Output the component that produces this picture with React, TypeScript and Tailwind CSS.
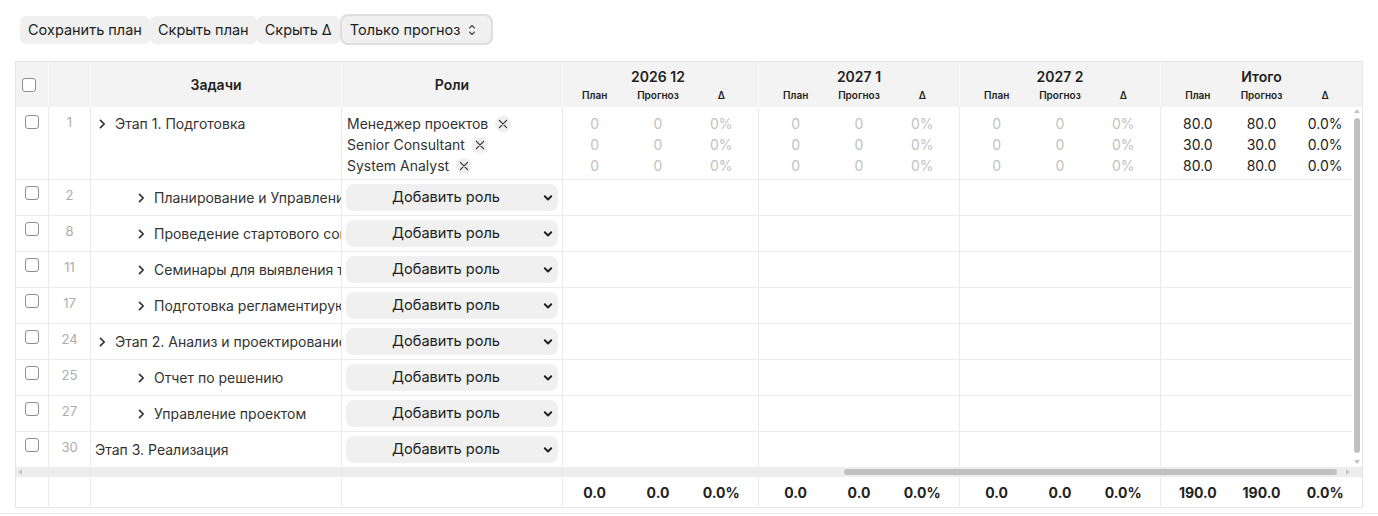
import React from "react";

type Task = { n: number; level: 0 | 1 | 2; title: string };

const tasks: Task[] = [
  { n: 2, level: 2, title: "Планирование и Управление проектом" },
  { n: 8, level: 2, title: "Проведение стартового совещания" },
  { n: 11, level: 2, title: "Семинары для выявления требований" },
  { n: 17, level: 2, title: "Подготовка регламентирующих документов" },
  { n: 24, level: 1, title: "Этап 2. Анализ и проектирование" },
  { n: 25, level: 2, title: "Отчет по решению" },
  { n: 27, level: 2, title: "Управление проектом" },
  { n: 30, level: 0, title: "Этап 3. Реализация" },
];

const groups = ["2026 12", "2027 1", "2027 2", "Итого"];
const roles = ["Менеджер проектов", "Senior Consultant", "System Analyst"];
const totals = [
  ["80.0", "80.0", "0.0%"],
  ["30.0", "30.0", "0.0%"],
  ["80.0", "80.0", "0.0%"],
];

function ChevronRight() {
  return (
    <svg width="12" height="12" viewBox="0 0 12 12" className="shrink-0">
      <path d="M4.5 2.3 L8.2 6 L4.5 9.7" fill="none" stroke="#333" strokeWidth="1.7" strokeLinecap="round" strokeLinejoin="round" />
    </svg>
  );
}

function ChevronDown() {
  return (
    <svg width="10" height="10" viewBox="0 0 10 10">
      <path d="M1.8 3.3 L5 6.5 L8.2 3.3" fill="none" stroke="#222" strokeWidth="2" strokeLinecap="round" strokeLinejoin="round" />
    </svg>
  );
}

function UpDown() {
  return (
    <svg width="8" height="14" viewBox="0 0 8 14">
      <path d="M1.5 5 L4 2.5 L6.5 5" fill="none" stroke="#444" strokeWidth="1.1" strokeLinecap="round" strokeLinejoin="round" />
      <path d="M1.5 9 L4 11.5 L6.5 9" fill="none" stroke="#444" strokeWidth="1.1" strokeLinecap="round" strokeLinejoin="round" />
    </svg>
  );
}

function XIcon() {
  return (
    <svg width="10" height="10" viewBox="0 0 10 10">
      <path d="M1.4 1.4 L8.6 8.6 M8.6 1.4 L1.4 8.6" fill="none" stroke="#333" strokeWidth="1.2" strokeLinecap="round" />
    </svg>
  );
}

function Tri({ dir }: { dir: "up" | "down" | "left" | "right" }) {
  const pts =
    dir === "up"
      ? "5,2 8,6 2,6"
      : dir === "down"
      ? "2,4 8,4 5,8"
      : dir === "left"
      ? "6,2 6,8 2,5"
      : "4,2 4,8 8,5";
  return (
    <svg width="10" height="10" viewBox="0 0 10 10">
      <polygon points={pts} fill="#c4c4c4" />
    </svg>
  );
}

function Check({ className = "" }: { className?: string }) {
  return (
    <input
      type="checkbox"
      className={"appearance-none block m-0 w-[14px] h-[14px] rounded-[3px] border border-[#8e8e8e] bg-white " + className}
    />
  );
}

function AddRole() {
  return (
    <div className="w-[212px] h-[27px] rounded-[8px] bg-[#f0f0f0] flex items-center pl-[8px] text-[14.6px] text-[#222]">
      <span className="flex-1 text-center">Добавить роль</span>
      <span className="w-[20px] flex items-center justify-center">
        <ChevronDown />
      </span>
    </div>
  );
}

function Toolbar() {
  const btn = "h-[28px] px-[8px] rounded-[6px] bg-[#f0f0f0] text-[14.5px] text-[#222] flex items-center";
  return (
    <div className="pt-[14px] pl-[20px] flex items-center h-[45px]">
      <button className={btn}>Сохранить план</button>
      <button className={btn}>Скрыть план</button>
      <button className={btn}>Скрыть Δ</button>
      <button className="h-[31px] pl-[8px] pr-[15px] rounded-[8px] bg-[#f0f0f0] border-2 border-[#dedede] text-[14.5px] text-[#222] flex items-center gap-[8px]">
        <span>Только прогноз</span>
        <UpDown />
      </button>
    </div>
  );
}

function HeaderRow() {
  return (
    <div className="flex h-[45px] bg-[#f3f3f3] text-[#222]">
      <div className="w-[33px] border-r border-[#fafafa] flex items-center pl-[6px]">
        <Check />
      </div>
      <div className="w-[42px] border-r border-[#fafafa]" />
      <div className="w-[251px] border-r border-[#fafafa] flex items-center justify-center text-[14px] font-semibold">Задачи</div>
      <div className="w-[221px] border-r border-[#fafafa] flex items-center justify-center text-[14px] font-semibold">Роли</div>
      <div className="w-[799px] overflow-hidden">
        <div className="flex ml-[-5px] w-[804px]">
          {groups.map((g, i) => (
            <div key={g} className={"w-[201px] shrink-0 h-[45px] pt-[6px] " + (i < 3 ? "border-r border-[#fafafa]" : "")}>
              <div className="h-[18px] leading-[18px] text-center text-[14px] font-semibold">{g}</div>
              <div className="mt-[2px] grid grid-cols-3 px-[5px] text-center text-[10px] leading-[14px] font-semibold">
                <span>План</span>
                <span>Прогноз</span>
                <span>Δ</span>
              </div>
            </div>
          ))}
        </div>
      </div>
    </div>
  );
}

function FirstRow() {
  return (
    <div className="flex h-[73px] shrink-0 border-b border-[#ebebeb]">
      <div className="w-[33px] border-r border-[#ebebeb] pl-[9px] pt-[8px]">
        <Check />
      </div>
      <div className="w-[42px] border-r border-[#ebebeb] pt-[7px] text-center text-[13px] leading-[16px] text-[#adadad]">1</div>
      <div className="w-[251px] border-r border-[#ebebeb] pt-[6px] pl-[5px] flex items-start overflow-hidden whitespace-nowrap text-[14px] leading-[21px]">
        <span className="h-[21px] w-[16px] flex items-center shrink-0">
          <ChevronRight />
        </span>
        <span className="ml-[3px]">Этап 1. Подготовка</span>
      </div>
      <div className="w-[221px] border-r border-[#ebebeb] pt-[6px] pl-[5px] text-[14px] leading-[21px]">
        {roles.map((r) => (
          <div key={r} className="flex items-center h-[21px]">
            <span>{r}</span>
            <span className="ml-[7px] w-[16px] h-[16px] rounded-full bg-[#efefef] flex items-center justify-center">
              <XIcon />
            </span>
          </div>
        ))}
      </div>
      <div className="w-[789px] overflow-hidden">
        <div className="flex ml-[-5px] w-[804px] h-full">
          {groups.map((g, gi) => (
            <div key={g} className={"w-[201px] shrink-0 h-full pt-[6px] px-[5px] " + (gi < 3 ? "border-r border-[#ebebeb]" : "")}>
              {[0, 1, 2].map((ri) => (
                <div key={ri} className={"grid grid-cols-3 text-center text-[14px] leading-[21px] " + (gi < 3 ? "text-[#c2c2c2]" : "text-[#222]")}>
                  {gi < 3 ? (
                    <>
                      <span>0</span>
                      <span>0</span>
                      <span>0%</span>
                    </>
                  ) : (
                    totals[ri].map((v, k) => <span key={k}>{v}</span>)
                  )}
                </div>
              ))}
            </div>
          ))}
        </div>
      </div>
    </div>
  );
}

function TaskRow({ t }: { t: Task }) {
  return (
    <div className="flex h-[36px] shrink-0 border-b border-[#ebebeb]">
      <div className="w-[33px] border-r border-[#ebebeb] pl-[9px] pt-[6px]">
        <Check />
      </div>
      <div className="w-[42px] border-r border-[#ebebeb] pt-[7px] text-center text-[13px] leading-[16px] text-[#adadad]">{t.n}</div>
      <div
        className={
          "w-[251px] border-r border-[#ebebeb] pt-[7px] flex items-start overflow-hidden whitespace-nowrap text-[14px] leading-[21px] " +
          (t.level === 2 ? "pl-[44px]" : t.level === 1 ? "pl-[5px]" : "pl-[4px]")
        }
      >
        {t.level > 0 && (
          <span className="h-[21px] w-[16px] flex items-center shrink-0 mr-[3px]">
            <ChevronRight />
          </span>
        )}
        <span>{t.title}</span>
      </div>
      <div className="w-[221px] border-r border-[#ebebeb] pt-[4px] pl-[4px]">
        <AddRole />
      </div>
      <div className="w-[789px] overflow-hidden">
        <div className="flex ml-[-5px] w-[804px] h-full">
          {groups.map((g, gi) => (
            <div key={g} className={"w-[201px] shrink-0 h-full " + (gi < 3 ? "border-r border-[#ebebeb]" : "")} />
          ))}
        </div>
      </div>
    </div>
  );
}

function VScroll() {
  return (
    <div className="w-[10px] shrink-0 bg-white flex flex-col items-center">
      <div className="h-[10px] flex items-center justify-center">
        <Tri dir="up" />
      </div>
      <div className="mt-[1px] w-[6px] h-[335px] rounded-full bg-[#c1c1c1]" />
      <div className="mt-[3px] h-[10px] flex items-center justify-center">
        <Tri dir="down" />
      </div>
    </div>
  );
}

function HScroll() {
  return (
    <div className="flex h-[10px] bg-[#ededed]">
      <div className="w-[10px] flex items-center justify-center">
        <Tri dir="left" />
      </div>
      <div className="flex-1 flex items-center justify-end pr-[5px]">
        <div className="w-[493px] h-[6px] rounded-full bg-[#c1c1c1]" />
      </div>
      <div className="w-[10px] flex items-center justify-center">
        <Tri dir="right" />
      </div>
      <div className="w-[10px]" />
    </div>
  );
}

function FooterRow() {
  const tot = [
    ["0.0", "0.0", "0.0%"],
    ["0.0", "0.0", "0.0%"],
    ["0.0", "0.0", "0.0%"],
    ["190.0", "190.0", "0.0%"],
  ];
  return (
    <div className="flex h-[30px] text-[14px] font-bold text-[#222]">
      <div className="w-[33px] border-r border-[#ebebeb]" />
      <div className="w-[42px] border-r border-[#ebebeb]" />
      <div className="w-[251px] border-r border-[#ebebeb]" />
      <div className="w-[221px] border-r border-[#ebebeb]" />
      <div className="w-[799px] overflow-hidden">
        <div className="flex ml-[-5px] w-[804px] h-full">
          {tot.map((row, gi) => (
            <div key={gi} className={"w-[201px] shrink-0 h-full px-[5px] grid grid-cols-3 items-center text-center " + (gi < 3 ? "border-r border-[#ebebeb]" : "")}>
              {row.map((v, k) => (
                <span key={k}>{v}</span>
              ))}
            </div>
          ))}
        </div>
      </div>
    </div>
  );
}

export default function App() {
  return (
    <div className="[font-family:Inter,'Liberation_Sans',sans-serif] text-[#333] bg-white w-[1378px] h-[516px] overflow-hidden">
      <Toolbar />
      <div className="ml-[15px] mt-[16px] w-[1348px] border border-[#e6e6e6]">
        <HeaderRow />
        <div className="flex h-[360px]">
          <div className="w-[1336px] h-[360px] overflow-hidden flex flex-col">
            <FirstRow />
            {tasks.map((t) => (
              <TaskRow key={t.n} t={t} />
            ))}
          </div>
          <VScroll />
        </div>
        <HScroll />
        <FooterRow />
      </div>
      <div className="mt-[5px] h-px bg-[#e8e8e8]" />
    </div>
  );
}
